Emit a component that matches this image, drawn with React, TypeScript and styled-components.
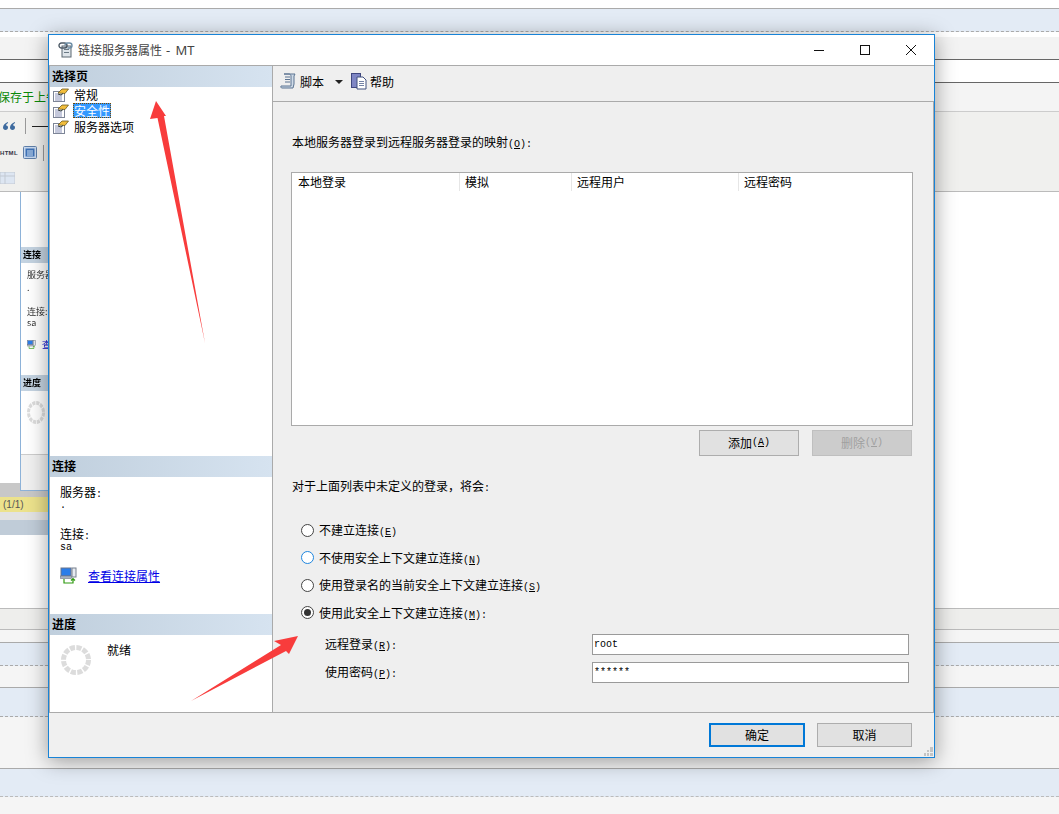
import React from "react";
import styled, { createGlobalStyle } from "styled-components";

const Global = createGlobalStyle`
  html, body { margin: 0; padding: 0; background: #fff; }
  body { font: 12px/16px "Noto Sans CJK SC", "Liberation Sans", sans-serif; color: #000; }
  * { box-sizing: border-box; }
`;

const Page = styled.div`
  position: relative;
  width: 1059px;
  height: 814px;
  overflow: hidden;
  display: flex;
  flex-direction: column;
`;

const Band = styled.div<{ $h: number; $bg?: string; $line?: string; $dash?: boolean }>`
  flex: none;
  height: ${(p) => p.$h}px;
  background: ${(p) => p.$bg ?? "#fff"};
  border-bottom: ${(p) => (p.$line ? `1px ${p.$dash ? "dashed" : "solid"} ${p.$line}` : "none")};
`;

const WhiteBand = styled(Band)`
  position: relative;
  display: flex;
  flex-direction: column;
  justify-content: flex-end;
`;

const SavedText = styled.div`
  margin-left: -2px;
  padding-top: 6px;
  color: #0a8a0a;
  white-space: nowrap;
`;

const ToolRows = styled(Band)`
  display: flex;
  flex-direction: column;
`;

const ToolRow = styled.div<{ $h: number; $gap: number }>`
  height: ${(p) => p.$h}px;
  display: flex;
  align-items: center;
  gap: ${(p) => p.$gap}px;
`;

const QuoteIconWrap = styled.span`
  margin-left: 3px;
  line-height: 0;
`;

const ToolSep = styled.span`
  width: 1px;
  height: 16px;
  background: #999;
`;

const ToolDash = styled.span`
  width: 16px;
  height: 1px;
  margin-left: -4px;
  background: #222;
`;

const TinyHtml = styled.span`
  font: bold 6px/8px "Liberation Sans", sans-serif;
  color: #334;
  letter-spacing: 0.3px;
  width: 17px;
`;

/* Window left behind the dialog */
const BackWindow = styled.div`
  position: absolute;
  left: 20px;
  top: 0;
  width: 60px;
  height: 299px;
  background: #fff;
  border: 1px solid #8db2d8;
  border-top: none;
  display: flex;
  flex-direction: column;
  font-size: 9px;
  line-height: 11px;
  filter: blur(0.3px);
  z-index: 1;
`;

const BackHead = styled.div<{ $mt: number }>`
  margin-top: ${(p) => p.$mt}px;
  height: 16px;
  padding-left: 2px;
  background: #c4d3e1;
  font-weight: 700;
  line-height: 15px;
  flex: none;
`;

const BackText = styled.div<{ $mt: number }>`
  margin: ${(p) => p.$mt}px 0 0 6px;
  color: #333;
  white-space: nowrap;
`;

const BackLinkRow = styled.div`
  margin: 11px 0 0 6px;
  display: flex;
  align-items: center;
  gap: 6px;
  color: #00c;
`;

const BackFoot = styled.div`
  margin-top: auto;
  height: 36px;
  background: #f0f0f0;
  border-top: 1px solid #ccc;
`;

const BackSpin = styled.div`
  margin: 10px 0 0 6px;
  line-height: 0;
`;

const StatusStrip = styled.div<{ $h: number; $bg: string }>`
  width: 60px;
  height: ${(p) => p.$h}px;
  background: ${(p) => p.$bg};
  font: 10px/15px "Liberation Sans", sans-serif;
  color: #555;
  padding-left: 3px;
`;

const StripGap = styled.div`
  height: 73px;
`;

/* Dialog */
const Dialog = styled.div`
  position: absolute;
  left: 48px;
  top: 34px;
  width: 887px;
  height: 724px;
  background: #f0f0f0;
  border: 1px solid #1883d7;
  box-shadow: 0 3px 20px rgba(0, 0, 0, 0.38);
  display: flex;
  flex-direction: column;
  z-index: 2;
`;

const TitleBar = styled.div`
  height: 31px;
  flex: none;
  background: #fff;
  border-bottom: 1px solid #aaa;
  display: flex;
  align-items: center;
  padding-left: 9px;
  color: #444;
`;

const TitleText = styled.span`
  margin-left: 5px;
  white-space: nowrap;
`;

const TitleLatin = styled.span`
  font: 13px/16px "Noto Sans", sans-serif;
  margin-left: 4px;
  word-spacing: 2px;
`;

const WinButtons = styled.div`
  margin-left: auto;
  display: flex;
`;

const WinButton = styled.div`
  width: 46px;
  height: 30px;
  display: flex;
  align-items: center;
  justify-content: center;
`;

const Body = styled.div`
  flex: 1;
  min-height: 0;
  display: flex;
  border-bottom: 1px solid #aaa;
`;

const Side = styled.div`
  flex: none;
  width: 224px;
  background: #fff;
  border-left: 1px solid #aaa;
  border-right: 1px solid #aaa;
  display: flex;
  flex-direction: column;
`;

const SideHead = styled.div`
  flex: none;
  height: 21px;
  padding-left: 2px;
  background: linear-gradient(90deg, #c0cfdd, #d6e3f0);
  font-weight: 700;
  font-size: 12px;
  line-height: 20px;
`;

const PageList = styled.div`
  flex: none;
  height: 369px;
  padding-left: 3px;
`;

const PageItem = styled.div`
  height: 16px;
  display: flex;
  align-items: center;
  gap: 4px;
`;

const PageText = styled.span<{ $selected?: boolean }>`
  margin-top: -1px;
  padding: 0 1px;
  height: 15px;
  line-height: 15px;
  color: ${(p) => (p.$selected ? "#fff" : "#000")};
  background: ${(p) => (p.$selected ? "#3399ff" : "transparent")};
  outline: ${(p) => (p.$selected ? "1px dotted #7a4a00" : "none")};
  outline-offset: -1px;
`;

const ConnBox = styled.div`
  flex: none;
  height: 137px;
  padding: 7px 0 0 10px;
`;

const ConnValue = styled.div`
  font: 10px/12px "Liberation Mono", monospace;
`;

const ConnSecond = styled.div`
  margin-top: 14px;
`;

const ConnLinkRow = styled.div`
  margin-top: 13px;
  display: flex;
  align-items: center;
  gap: 11px;
`;

const ConnLink = styled.a`
  color: #0000e6;
  text-decoration: underline;
`;

const ProgBox = styled.div`
  flex: 1;
  display: flex;
  align-items: flex-start;
  padding: 7px 0 0 11px;
  gap: 16px;
`;

const ProgSpin = styled.div`
  margin-top: 3px;
  line-height: 0;
`;

const Main = styled.div`
  flex: 1;
  min-width: 0;
  display: flex;
  flex-direction: column;
  background: #efefef;
`;

const Toolbar = styled.div`
  flex: none;
  height: 36px;
  border-bottom: 1px solid #aaa;
  display: flex;
  align-items: center;
  padding: 0 0 4px 7px;
`;

const ToolText = styled.span`
  margin-left: 3px;
`;

const Caret = styled.span`
  margin: 0 8px 0 11px;
  width: 0;
  height: 0;
  border-left: 4px solid transparent;
  border-right: 4px solid transparent;
  border-top: 4px solid #222;
`;

const Form = styled.div`
  flex: 1;
  border-right: 1px solid #aaa;
  padding: 32px 20px 0 18px;
  display: flex;
  flex-direction: column;
`;

const FormLabel = styled.div<{ $mt?: number }>`
  margin: ${(p) => p.$mt ?? 0}px 0 0 1px;
  white-space: nowrap;
`;

const Mono = styled.span`
  font: 10px/10px "Liberation Mono", monospace;
`;

const ListBox = styled.div`
  flex: none;
  margin-top: 22px;
  height: 254px;
  background: #fff;
  border: 1px solid #aaa;
`;

const ListHead = styled.div`
  display: grid;
  grid-template-columns: 168px 112px 167px 1fr;
  height: 18px;
`;

const ListCol = styled.div`
  padding-left: 5px;
  border-right: 1px solid #e6e6e6;
  line-height: 18px;
  &:first-child { padding-left: 6px; }
  &:last-child { border-right: none; }
`;

const ActionRow = styled.div`
  margin: 4px 1px 0 0;
  display: flex;
  justify-content: flex-end;
  gap: 13px;
`;

const Button = styled.div<{ $disabled?: boolean; $primary?: boolean; $w: number; $h: number }>`
  width: ${(p) => p.$w}px;
  height: ${(p) => p.$h}px;
  display: flex;
  align-items: center;
  justify-content: center;
  white-space: nowrap;
  background: ${(p) => (p.$disabled ? "#cccccc" : "#e1e1e1")};
  border: ${(p) =>
    p.$primary ? "2px solid #0078d7" : `1px solid ${p.$disabled ? "#bfbfbf" : "#adadad"}`};
  color: ${(p) => (p.$disabled ? "#a0a0a0" : "#000")};
`;

const RadioGroup = styled.div`
  margin: 28px 0 0 10px;
  display: flex;
  flex-direction: column;
  gap: 11.5px;
`;

const RadioRow = styled.div`
  height: 16px;
  display: flex;
  align-items: center;
  gap: 5px;
  white-space: nowrap;
`;

const Radio = styled.span<{ $checked?: boolean; $focus?: boolean }>`
  flex: none;
  width: 13px;
  height: 13px;
  border-radius: 50%;
  background: #fff;
  border: 1px solid ${(p) => (p.$focus ? "#1f86de" : "#444")};
  display: flex;
  align-items: center;
  justify-content: center;
  &::after {
    content: "";
    display: ${(p) => (p.$checked ? "block" : "none")};
    width: 7px;
    height: 7px;
    border-radius: 50%;
    background: #333;
  }
`;

const FieldGroup = styled.div`
  margin: 13px 0 0 34px;
  display: flex;
  flex-direction: column;
  gap: 7px;
`;

const FieldRow = styled.div`
  display: flex;
  align-items: center;
  height: 21px;
`;

const FieldLabel = styled.span`
  width: 267px;
  white-space: nowrap;
`;

const FieldInput = styled.div`
  width: 317px;
  height: 21px;
  background: #fff;
  border: 1px solid #9a9a9a;
  padding-left: 1px;
  font: 10px/19px "Liberation Mono", monospace;
`;

const Footer = styled.div`
  flex: none;
  height: 44px;
  position: relative;
  display: flex;
  justify-content: flex-end;
  align-items: flex-start;
  gap: 12px;
  padding: 10px 22px 0 0;
`;

const Grip = styled.svg`
  position: absolute;
  right: 1px;
  bottom: 1px;
`;

const Overlay = styled.svg`
  position: absolute;
  left: 0;
  top: 0;
  z-index: 3;
  pointer-events: none;
`;

const LinkServerIcon = () => (
  <svg width="15" height="16" viewBox="0 0 15 16">
    <rect x="4" y="4" width="9" height="11" fill="#dfe5ea" stroke="#5a6670" />
    <rect x="6" y="7" width="5" height="1" fill="#6b7a85" />
    <rect x="6" y="10" width="5" height="1" fill="#6b7a85" />
    <path d="M1 3.5a2.5 2.5 0 0 1 2.5-2.5h3a2.5 2.5 0 0 1 0 5h-3A2.5 2.5 0 0 1 1 3.5z" fill="none" stroke="#4d5a66" strokeWidth="1.4" />
    <path d="M7 3.5a2.5 2.5 0 0 1 2.5-2.5h2a2.5 2.5 0 0 1 0 5h-2" fill="none" stroke="#6d8ea6" strokeWidth="1.4" />
  </svg>
);

const PageIcon = () => (
  <svg width="16" height="14" viewBox="0 0 16 14">
    <rect x="0.5" y="3.5" width="11" height="10" fill="#fff" stroke="#7d8597" />
    <path d="M2 6h4M2 8h7M2 10h7M2 12h7" stroke="#8a92b8" />
    <path d="M5 5l4-4h6.500L12 5.500z" fill="#f2bd3c" stroke="#6c5a20" strokeWidth="0.8" />
    <path d="M5 6l3 1 2-1.500" fill="none" stroke="#2f3a3a" />
  </svg>
);

const ScriptIcon = () => (
  <svg width="17" height="17" viewBox="0 0 17 17">
    <path d="M4 1h11l-1 2v8l-1 4H2c-1 0-1.500-1-1-2h10V3c0-1-1-2-2-2z" fill="#cfdbe8" stroke="#5a7391" />
    <path d="M5 4h5M5 6.500h5M5 9h5" stroke="#5a7391" />
  </svg>
);

const HelpIcon = () => (
  <svg width="16" height="17" viewBox="0 0 16 17">
    <rect x="0.5" y="0.5" width="9" height="14" fill="#7f86c4" stroke="#40487f" />
    <path d="M6 4h6l3 3v9H6z" fill="#fff" stroke="#40507f" />
    <path d="M8 8.500h5M8 10.500h5M8 12.500h5" stroke="#7483a6" />
  </svg>
);

const ConnIcon = ({ size = 17 }: { size?: number }) => (
  <svg width={size} height={size} viewBox="0 0 17 17">
    <rect x="1" y="1" width="10" height="8" fill="#2b7de9" stroke="#69758c" />
    <rect x="0.500" y="9" width="11" height="2.500" fill="#aab2bf" stroke="#707887" strokeWidth="0.600" />
    <rect x="12" y="1" width="4" height="9" fill="#e6eaf0" stroke="#77808e" />
    <path d="M4 12v4h9v-4M11 13.500l2-2 2 2" fill="none" stroke="#2f9a10" strokeWidth="1.200" />
  </svg>
);

const Spinner = ({ w = 30, h = 30 }: { w?: number; h?: number }) => (
  <svg width={w} height={h} viewBox="0 0 30 30" preserveAspectRatio="none">
    <circle cx="15" cy="15" r="12.500" fill="none" stroke="#dcdcdc" strokeWidth="5" strokeDasharray="5.100 1.445" />
  </svg>
);

const QuoteIcon = () => (
  <svg width="12" height="8" viewBox="0 0 12 8">
    <path d="M5 0C2 1 0 3 0 5.500 0 7 1 8 2.500 8S5 7 5 5.500 4 3.500 3 3.500C3 2.500 4 1.500 5 1zM12 0C9 1 7 3 7 5.500 7 7 8 8 9.500 8S12 7 12 5.500 11 3.500 10 3.500c0-1 1-2 2-2.500z" fill="#3d6a9e" />
  </svg>
);

const HtmlBoxIcon = () => (
  <svg width="14" height="13" viewBox="0 0 14 13">
    <rect x="0.500" y="0.500" width="13" height="12" rx="1" fill="#c9d9ee" stroke="#5f7fa8" />
    <rect x="2.500" y="2.500" width="9" height="8" fill="#3f72b5" />
    <path d="M4 5h6M4 7h6M4 9h6" stroke="#cfe0f5" />
  </svg>
);

const TableIcon = () => (
  <svg width="15" height="12" viewBox="0 0 15 12">
    <rect x="0" y="0" width="15" height="12" fill="#dde6f2" stroke="#c2c9d2" />
    <path d="M0 4h15M5 0v12" stroke="#c2c9d2" />
  </svg>
);

const Key = ({ k, tail }: { k: string; tail?: string }) => (
  <Mono>
    (<u>{k}</u>){tail}
  </Mono>
);

export default function App() {
  return (
    <Page>
      <Global />
      <Band $h={9} $line="#aaa" />
      <Band $h={23} $bg="#e3ebf5" $line="#aaa" $dash />
      <Band $h={5} />
      <Band $h={23} $bg="#f3f3f3" $line="#666" />
      <Band $h={23} $line="#666" />
      <Band $h={29} $bg="#f4f4f4" $line="#ccc">
        <SavedText>保存于上午</SavedText>
      </Band>
      <ToolRows $h={80} $bg="#f0f0ee" $line="#bbb">
        <ToolRow $h={28} $gap={10}>
          <QuoteIconWrap><QuoteIcon /></QuoteIconWrap>
          <ToolSep />
          <ToolDash />
        </ToolRow>
        <ToolRow $h={25} $gap={6}>
          <TinyHtml>HTML</TinyHtml>
          <HtmlBoxIcon />
          <ToolSep />
        </ToolRow>
        <ToolRow $h={26} $gap={0}>
          <TableIcon />
        </ToolRow>
      </ToolRows>
      <WhiteBand $h={417} $line="#bbb">
        <BackWindow>
          <BackHead $mt={55}>连接</BackHead>
          <BackText $mt={6}>服务器</BackText>
          <BackText $mt={2}>.</BackText>
          <BackText $mt={13}>连接:</BackText>
          <BackText $mt={0}>sa</BackText>
          <BackLinkRow>
            <ConnIcon size={9} />
            查看
          </BackLinkRow>
          <BackHead $mt={25}>进度</BackHead>
          <BackSpin>
            <Spinner w={18} h={23} />
          </BackSpin>
          <BackFoot />
        </BackWindow>
        <StatusStrip $h={14} $bg="#c8c8c8" />
        <StatusStrip $h={15} $bg="#ece28c">(1/1)</StatusStrip>
        <StatusStrip $h={8} $bg="#e2e2e2" />
        <StatusStrip $h={15} $bg="#c0ccd8" />
        <StripGap />
      </WhiteBand>
      <Band $h={21} $bg="#eeeeec" $line="#bbb" />
      <Band $h={13} $bg="#f5f5f5" $line="#aaa" />
      <Band $h={23} $bg="#e3ebf5" $line="#aaa" $dash />
      <Band $h={22} $bg="#f5f5f5" $line="#aaa" />
      <Band $h={29} $bg="#e3ebf5" $line="#aaa" $dash />
      <Band $h={52} $bg="#f5f5f5" $line="#aaa" />
      <Band $h={28} $bg="#e3ebf5" $line="#bbb" $dash />
      <Band $h={17} $bg="#f5f5f5" />

      <Dialog>
        <TitleBar>
          <LinkServerIcon />
          <TitleText>链接服务器属性<TitleLatin>- MT</TitleLatin></TitleText>
          <WinButtons>
            <WinButton>
              <svg width="10" height="10" viewBox="0 0 10 10"><path d="M0 5.500h10" stroke="#111" /></svg>
            </WinButton>
            <WinButton>
              <svg width="10" height="10" viewBox="0 0 10 10"><rect x="0.500" y="0.500" width="9" height="9" fill="none" stroke="#111" /></svg>
            </WinButton>
            <WinButton>
              <svg width="10" height="10" viewBox="0 0 10 10"><path d="M0 0l10 10M10 0L0 10" stroke="#111" /></svg>
            </WinButton>
          </WinButtons>
        </TitleBar>
        <Body>
          <Side>
            <SideHead>选择页</SideHead>
            <PageList>
              <PageItem><PageIcon /><PageText>常规</PageText></PageItem>
              <PageItem><PageIcon /><PageText $selected>安全性</PageText></PageItem>
              <PageItem><PageIcon /><PageText>服务器选项</PageText></PageItem>
            </PageList>
            <SideHead>连接</SideHead>
            <ConnBox>
              <div>服务器<Mono>:</Mono></div>
              <ConnValue>.</ConnValue>
              <ConnSecond>连接<Mono>:</Mono></ConnSecond>
              <ConnValue>sa</ConnValue>
              <ConnLinkRow>
                <ConnIcon />
                <ConnLink>查看连接属性</ConnLink>
              </ConnLinkRow>
            </ConnBox>
            <SideHead>进度</SideHead>
            <ProgBox>
              <ProgSpin><Spinner /></ProgSpin>
              <span>就绪</span>
            </ProgBox>
          </Side>
          <Main>
            <Toolbar>
              <ScriptIcon />
              <ToolText>脚本</ToolText>
              <Caret />
              <HelpIcon />
              <ToolText>帮助</ToolText>
            </Toolbar>
            <Form>
              <FormLabel>本地服务器登录到远程服务器登录的映射<Key k="O" tail=":" /></FormLabel>
              <ListBox>
                <ListHead>
                  <ListCol>本地登录</ListCol>
                  <ListCol>模拟</ListCol>
                  <ListCol>远程用户</ListCol>
                  <ListCol>远程密码</ListCol>
                </ListHead>
              </ListBox>
              <ActionRow>
                <Button $w={100} $h={26}>添加<Key k="A" /></Button>
                <Button $w={100} $h={26} $disabled>删除<Key k="V" /></Button>
              </ActionRow>
              <FormLabel $mt={22}>对于上面列表中未定义的登录，将会<Mono>:</Mono></FormLabel>
              <RadioGroup>
                <RadioRow><Radio /><span>不建立连接<Key k="E" /></span></RadioRow>
                <RadioRow><Radio $focus /><span>不使用安全上下文建立连接<Key k="N" /></span></RadioRow>
                <RadioRow><Radio /><span>使用登录名的当前安全上下文建立连接<Key k="S" /></span></RadioRow>
                <RadioRow><Radio $checked /><span>使用此安全上下文建立连接<Key k="M" tail=":" /></span></RadioRow>
              </RadioGroup>
              <FieldGroup>
                <FieldRow>
                  <FieldLabel>远程登录<Key k="R" tail=":" /></FieldLabel>
                  <FieldInput>root</FieldInput>
                </FieldRow>
                <FieldRow>
                  <FieldLabel>使用密码<Key k="P" tail=":" /></FieldLabel>
                  <FieldInput>******</FieldInput>
                </FieldRow>
              </FieldGroup>
            </Form>
          </Main>
        </Body>
        <Footer>
          <Button $w={96} $h={24} $primary>确定</Button>
          <Button $w={95} $h={24}>取消</Button>
          <Grip width="9" height="9" viewBox="0 0 9 9">
            <path d="M6 0h3v3H6zM3 3h2v2H3zM6 3h3v2H6zM0 6h2v3H0zM3 6h2v3H3zM6 6h3v3H6z" fill="#c4c4c4" />
          </Grip>
        </Footer>
      </Dialog>

      <Overlay width="1059" height="814" viewBox="0 0 1059 814">
        <path d="M156 101L166 116L164 116L205 343L157.500 118L150 119Z" fill="#f83c3c" />
        <path d="M298 636L274 641L281 645L191 701L286 651L289 654Z" fill="#f83c3c" />
      </Overlay>
    </Page>
  );
}
